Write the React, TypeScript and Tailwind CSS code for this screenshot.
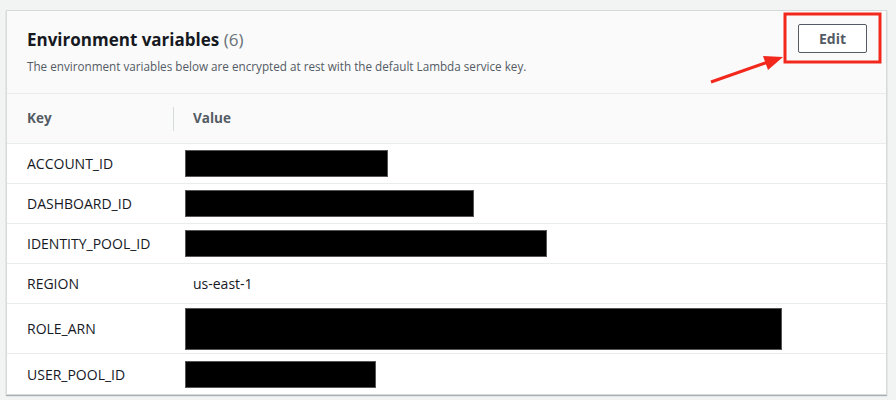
const rows: { key: string; value?: string; box?: number; tall?: boolean }[] = [
  { key: 'ACCOUNT_ID', box: 203 },
  { key: 'DASHBOARD_ID', box: 289 },
  { key: 'IDENTITY_POOL_ID', box: 362 },
  { key: 'REGION', value: 'us-east-1' },
  { key: 'ROLE_ARN', box: 597, tall: true },
  { key: 'USER_POOL_ID', box: 191 },
];

const App = () => {
  return (
    <div
      className="relative w-[896px] h-[400px] bg-[#f2f3f3] pt-[10px] pl-[6px] overflow-hidden"
      style={{ fontFamily: '"Open Sans", "Liberation Sans", sans-serif' }}
    >
      <div className="w-[881px] bg-white border border-[#d5dbdb] shadow-[0_1px_1px_rgba(0,28,36,0.3)]">
        {/* header */}
        <div className="h-[83px] bg-[#fafafa] border-b border-[#eaeded] flex items-start justify-between pl-[20px] pr-[19px] pt-[13px]">
          <div className="mt-[4px]">
            <h2 className="text-[17px] leading-[23px] font-bold text-[#16191f]">
              Environment variables <span className="font-normal text-[#687078]">(6)</span>
            </h2>
            <p className="mt-[7px] text-[11.7px] leading-[16px] text-[#545b64]">
              The environment variables below are encrypted at rest with the default Lambda service key.
            </p>
          </div>
          <button className="w-[69px] h-[29px] border border-[#545b64] rounded-[2px] bg-white text-[14px] font-bold text-[#545b64]">
            Edit
          </button>
        </div>

        {/* table header */}
        <div className="h-[50px] bg-[#fafafa] border-b border-[#eaeded] flex items-center">
          <div className="w-[166px] pl-[20px] text-[13.5px] font-bold text-[#545b64]">Key</div>
          <div className="w-px h-[24px] bg-[#d5dbdb]" />
          <div className="pl-[19px] text-[13.5px] font-bold text-[#545b64]">Value</div>
        </div>

        {/* rows */}
        {rows.map((r, i) => (
          <div
            key={r.key}
            className={`flex items-center ${r.tall ? 'h-[50px]' : 'h-[40px]'} ${
              i < rows.length - 1 ? 'border-b border-[#eaeded]' : ''
            }`}
          >
            <div className="w-[178px] pl-[20px] text-[14px] text-[#16191f]">{r.key}</div>
            {r.box ? (
              <div
                className={`bg-black border border-[#555] ${r.tall ? 'h-[42px]' : 'h-[27px]'}`}
                style={{ width: r.box }}
              />
            ) : (
              <div className="pl-[8px] text-[14px] text-[#16191f]">{r.value}</div>
            )}
          </div>
        ))}
      </div>

      {/* red annotation */}
      <svg className="absolute left-0 top-0 pointer-events-none" width="896" height="400">
        <rect x="785" y="14" width="95" height="48" fill="none" stroke="#f2281d" strokeWidth="3" />
        <line x1="711" y1="82" x2="768" y2="62" stroke="#f2281d" strokeWidth="3" />
        <polygon points="783,57 763,56 768,70" fill="#f2281d" />
      </svg>
    </div>
  );
};

export default App;
